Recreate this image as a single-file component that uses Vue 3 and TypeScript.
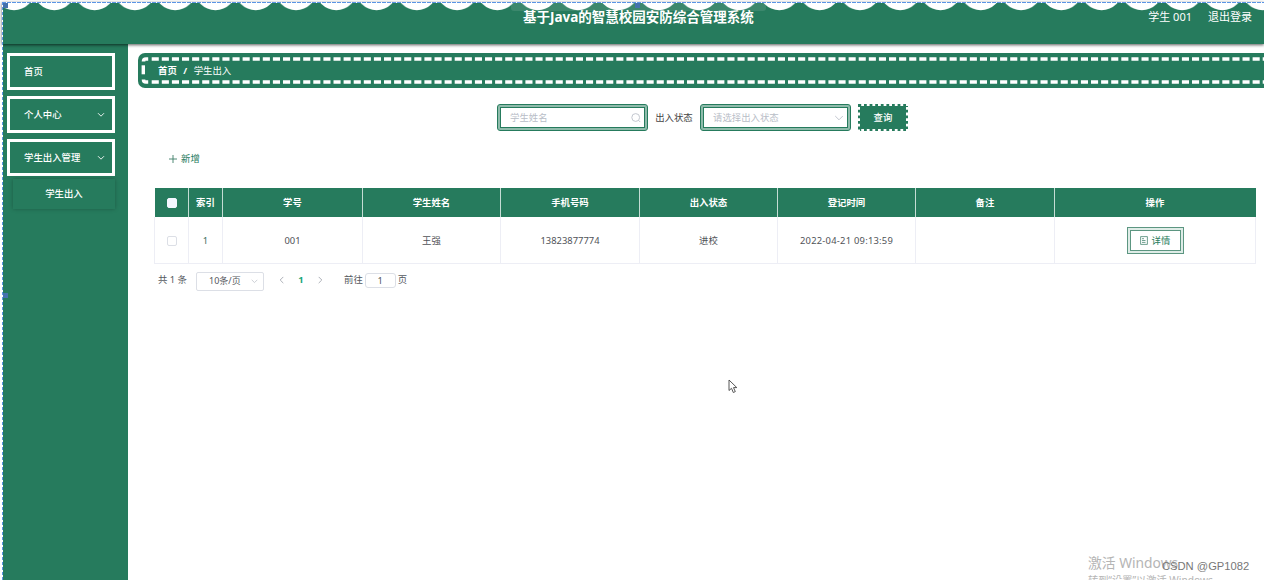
<script setup lang="ts">
interface MenuItem { label: string; arrow: boolean }
const menu: MenuItem[] = [
  { label: '首页', arrow: false },
  { label: '个人中心', arrow: true },
  { label: '学生出入管理', arrow: true },
]
const headers: string[] = ['索引', '学号', '学生姓名', '手机号码', '出入状态', '登记时间', '备注', '操作']
const row: string[] = ['1', '001', '王强', '13823877774', '进校', '2022-04-21 09:13:59', '']
</script>

<template>
  <div class="page">
    <header class="header">
      <svg class="scallops" width="1262" height="12">
        <defs>
          <pattern id="scallop" x="-8.1" y="0" width="40.28" height="12" patternUnits="userSpaceOnUse">
            <circle cx="20.14" cy="-12.8" r="21" fill="#fff" />
          </pattern>
        </defs>
        <rect width="1262" height="12" fill="url(#scallop)" />
      </svg>
      <div class="veil"></div>
      <h1 class="title">基于Java的智慧校园安防综合管理系统</h1>
      <div class="user"><span>学生 001</span><span>退出登录</span></div>
    </header>
    <div class="body">
      <aside class="sidebar">
        <div v-for="m in menu" :key="m.label" class="item">
          <span>{{ m.label }}</span>
          <svg v-if="m.arrow" width="8" height="6" viewBox="0 0 8 6"><path d="M1 1.2 4 4.2 7 1.2" fill="none" stroke="#e6f1ed" stroke-width="1" /></svg>
        </div>
        <div class="sub">学生出入</div>
      </aside>
      <main class="main">
        <nav class="crumb">
          <svg class="stitch" width="1126" height="35">
            <path d="M13.7 6H1126M13.7 29H1126" stroke="#fff" stroke-width="3.7" stroke-dasharray="7.1 3" fill="none" />
            <path d="M5.3 12.3V21.3" stroke="#fff" stroke-width="3.4" />
            <path d="M3.7 8.5Q3.7 4.2 8 4.2H10.2V7.8H7.4V8.5ZM3.7 26.5Q3.7 30.8 8 30.8H10.2V27.2H7.4V26.5Z" fill="#fff" />
          </svg>
          <b>首页</b><b class="slash">/</b><span>学生出入</span>
        </nav>
        <div class="filters">
          <div class="field"><span>学生姓名</span>
            <svg width="10" height="10" viewBox="0 0 10 10" fill="none" stroke="#bcc1ca" stroke-width=".9"><circle cx="4.7" cy="4.5" r="3.9" /><path d="m7.5 7.3 1.8 1.8" /></svg>
          </div>
          <label class="label">出入状态</label>
          <div class="field"><span>请选择出入状态</span>
            <svg width="10" height="8" viewBox="0 0 10 8" fill="none" stroke="#bcc1ca" stroke-width=".9"><path d="M1.2 2 5 5.8 8.8 2" /></svg>
          </div>
          <button class="query">
            <svg class="teeth" width="50" height="27"><path d="M3.2 1H50M3.2 26H50M1 3V27M49 3V27" stroke="#fff" stroke-width="2" stroke-dasharray="2.8 2.8" /></svg>
            <span>查询</span>
          </button>
        </div>
        <div class="add">
          <svg width="8" height="8" viewBox="0 0 8 8" stroke="#3c7d68" stroke-width=".9"><path d="M0 4H8M4 0V8" /></svg>
          <span>新增</span>
        </div>
        <div class="table">
          <div class="tr head">
            <div class="cell"><i class="box solid"></i></div>
            <div v-for="h in headers" :key="h" class="cell">{{ h }}</div>
          </div>
          <div class="tr data">
            <div class="cell"><i class="box"></i></div>
            <div v-for="(c, i) in row" :key="i" class="cell" :class="{ date: i === 5, index: i === 0 }">{{ c }}</div>
            <div class="cell">
              <button class="detail">
                <svg width="8" height="9" viewBox="0 0 8 9" fill="none" stroke="#4c8975" stroke-width=".8"><path d="M.6.6H7.4V8.4H.6ZM2 2.7H4M2 4.5H5.5M2 6.4H5.5" /></svg>
                <span>详情</span>
              </button>
            </div>
          </div>
        </div>
        <div class="pager">
          <span class="total">共 1 条</span>
          <div class="size"><span>10条/页</span><svg width="7" height="5" viewBox="0 0 7 5"><path d="M.7.8 3.5 3.6 6.3.8" fill="none" stroke="#c0c4cc" stroke-width=".8" /></svg></div>
          <svg class="prev" width="5" height="8" viewBox="0 0 5 8"><path d="M4.3.9 1.2 4 4.3 7.1" fill="none" stroke="#a4a8b0" stroke-width=".9" /></svg>
          <b class="current">1</b>
          <svg class="next" width="5" height="8" viewBox="0 0 5 8"><path d="M.7.9 3.8 4 .7 7.1" fill="none" stroke="#a4a8b0" stroke-width=".9" /></svg>
          <span class="goto">前往</span><span class="num">1</span><span>页</span>
        </div>
      </main>
    </div>
    <div class="edge top"></div>
    <div class="edge left"></div>
    <i class="handle h1"></i><i class="handle h2"></i><i class="handle h3"></i>
    <svg class="cursor" width="10" height="15" viewBox="0 0 10 15"><path d="M1 1V11.5L3.5 9.3 5.3 13.5 7.3 12.6 5.5 8.6H8.8Z" fill="#fff" stroke="#444" stroke-width=".9" /></svg>
    <div class="activate"><div class="a1">激活 Windows</div><div class="a2">转到“设置”以激活 Windows</div></div>
    <div class="mark">CSDN @GP1082</div>
  </div>
</template>

<style>
body { margin: 0; overflow: hidden; }
</style>
<style scoped>
.page { position: relative; box-sizing: border-box; width: 1264px; height: 580px; padding: 2px 0 0 2px; overflow: hidden; background: #fff; color: #555960; font: 9.4px/14px "Noto Sans", "Noto Sans CJK SC", sans-serif; }
.header { position: relative; z-index: 2; height: 42px; background: #267b5d; color: #fff; box-shadow: 0 1px 3px rgba(0, 0, 0, .65); }
.scallops { position: absolute; left: 0; top: 0; }
.veil { position: absolute; left: 509px; top: 1px; width: 255px; height: 8px; background: rgba(255, 255, 255, .1); border-radius: 0 0 3px 3px; }
.title { position: relative; margin: 0; padding: 6px 0 0 521px; font-size: 13.5px; line-height: 19px; font-weight: 700; white-space: nowrap; }
.user { position: absolute; right: 12px; top: 7px; display: flex; gap: 16px; font-size: 11px; line-height: 16px; white-space: nowrap; }
.body { display: flex; height: 536px; }
.sidebar { box-sizing: border-box; width: 126px; flex: none; padding: 9px 0 0 5px; background: #267b5d; color: #fff; font-weight: 500; }
.item { box-sizing: border-box; width: 108px; height: 37px; margin-bottom: 6px; padding: 0 7px 0 14px; border: 3px solid #fff; display: flex; align-items: center; justify-content: space-between; }
.sub { width: 102px; height: 30px; margin: -3px 0 0 6px; line-height: 30px; text-align: center; box-shadow: 0 0 4px rgba(0, 0, 0, .25); }
.main { flex: 1; min-width: 0; padding: 9px 0 0 10px; }
.crumb { position: relative; box-sizing: border-box; height: 35px; padding-left: 20px; display: flex; align-items: center; background: #267b5d; border-radius: 7px 0 0 7px; color: #fff; }
.stitch { position: absolute; left: 0; top: 0; }
.slash { margin: 0 6.5px; }
.filters { display: flex; align-items: center; margin: 16px 0 0 359px; height: 27px; }
.field { box-sizing: border-box; width: 151px; height: 27px; padding: 0 3px 0 9px; border: 4px double #267b5d; border-radius: 3px; display: flex; align-items: center; justify-content: space-between; color: #b8bdc7; background: linear-gradient(#fff, #fff) padding-box, #8fbbab border-box; }
.label { width: 52px; text-align: center; color: #444; }
.query { position: relative; box-sizing: border-box; width: 50px; height: 27px; margin-left: 7px; padding: 0; border: 0; background: #267b5d; color: #fff; font: inherit; font-weight: 500; }
.teeth { position: absolute; left: 0; top: 0; }
.add { display: flex; align-items: center; gap: 4px; height: 14px; margin: 21px 0 0 31px; color: #267b5d; }
.table { width: 1101px; margin: 22px 0 0 17px; }
.tr { display: grid; grid-template-columns: 34px 34px 140px 138px 139px 138px 138px 139px 201px; }
.cell { display: flex; align-items: center; justify-content: center; border-right: 1px solid #edeef5; }
.head { height: 29px; background: #267b5d; color: #fff; font-weight: 700; }
.head .cell { border-color: #c5dcd4; }
.head .cell:last-child { border-color: #267b5d; }
.data { height: 46px; border: solid #edeef5; border-width: 0 0 1px 1px; margin-left: -1px; color: #505358; line-height: 16px; }
.data .cell { padding-top: 1px; }
.data .date { letter-spacing: .24px; }
.data .index { color: #3c6f60; }
.box { box-sizing: border-box; width: 10px; height: 10px; border: 1px solid #dcdfe6; border-radius: 2px; background: #fff; }
.solid { background: #f3f7ff; border-color: #f3f7ff; }
.detail { box-sizing: border-box; width: 57px; height: 27px; padding: 0; display: flex; align-items: center; justify-content: center; gap: 4px; border: 4px double #5c9681; background: linear-gradient(#fff, #fff) padding-box, #dfece7 border-box; color: #267b5d; font: inherit; }
.pager { display: flex; align-items: center; height: 20px; margin: 6px 0 0 20px; white-space: nowrap; }
.total { width: 38px; }
.size { box-sizing: border-box; width: 68px; height: 19px; margin-top: 2px; padding: 0 5px 0 12px; display: flex; align-items: center; justify-content: space-between; border: 1px solid #dcdfe6; border-radius: 2px; font-size: 9px; }
.prev { margin-left: 15px; }
.current { width: 34px; text-align: center; color: #1aa579; }
.goto { margin-left: 21px; }
.num { box-sizing: border-box; width: 31px; height: 15px; margin: 0 2px 0 2px; line-height: 13px; text-align: center; border: 1px solid #dcdfe6; border-radius: 3px; }
.edge { position: absolute; z-index: 4; }
.top { left: 2px; right: 0; top: 2px; height: 1px; background: repeating-linear-gradient(90deg, #5b95e5 0 4px, #fff 4px 5px); }
.left { left: 2px; top: 2px; bottom: 0; width: 1px; background: repeating-linear-gradient(#5b95e5 0 3px, #fff 3px 5px); }
.handle { position: absolute; z-index: 5; width: 5px; height: 5px; background: #4472ac; }
.h1 { left: 3px; top: 3px; }
.h2 { left: 635px; top: 3px; }
.h3 { left: 3px; top: 293px; }
.cursor { position: absolute; left: 728px; top: 379px; }
.activate { position: absolute; left: 1088px; top: 553px; color: #b5b5b5; white-space: nowrap; }
.a1 { font-size: 13.8px; line-height: 20px; }
.a2 { font-size: 10.2px; line-height: 14px; }
.mark { position: absolute; left: 1162px; top: 558px; color: #777; font: 11.2px/16px "Liberation Sans", sans-serif; white-space: nowrap; }
</style>
